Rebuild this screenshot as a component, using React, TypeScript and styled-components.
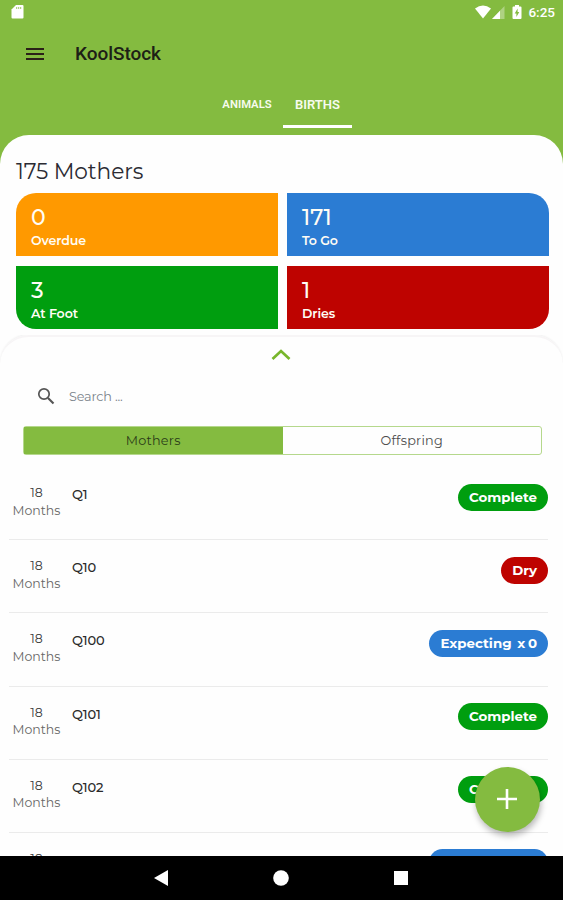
import React from "react";
import styled, { createGlobalStyle } from "styled-components";

const GREEN = "#84bb40";
const COMPLETE = "#009e0f";
const BLUE = "#2b7cd3";
const RED = "#be0300";

const GlobalStyle = createGlobalStyle`
  * { box-sizing: border-box; }
  body { margin: 0; background: #fff; font-family: Montserrat, Inter, sans-serif; }
  button, input { font: inherit; border: 0; padding: 0; background: none; }
`;

const Screen = styled.div`
  position: relative;
  display: flex;
  flex-direction: column;
  width: 563px;
  height: 900px;
  overflow: hidden;
  background: ${GREEN};
`;

const StatusBar = styled.div`
  display: flex;
  align-items: center;
  height: 24px;
  padding: 0 8px 0 11px;
  color: #fff;
`;

const StatusIcons = styled.div`
  display: flex;
  align-items: center;
  margin-left: auto;
`;

const BatteryIcon = styled.svg`
  margin-left: 7px;
`;

const Clock = styled.span`
  margin-left: 6px;
  font: 500 13.5px/24px Roboto, sans-serif;
`;

const AppBar = styled.header`
  display: flex;
  align-items: center;
  height: 59px;
  padding-left: 26px;
`;

const MenuButton = styled.button`
  display: flex;
  width: 18px;
  color: #2b2118;
`;

const AppTitle = styled.h1`
  margin: 0 0 0 31px;
  font: 500 19px/24px Roboto, sans-serif;
  letter-spacing: -0.05px;
  color: #1d2016;
`;

const Tabs = styled.nav`
  display: flex;
  height: 52px;
  padding-left: 211px;
`;

const Tab = styled.button<{ $active?: boolean }>`
  width: ${(p) => (p.$active ? 69 : 72)}px;
  height: 45px;
  padding-top: 2px;
  border-bottom: 3px solid ${(p) => (p.$active ? "#fff" : "transparent")};
  font: ${(p) => (p.$active ? "600 13px" : "600 11.3px")}/40px Roboto, sans-serif;
  color: #f7fbee;
`;

const Summary = styled.section`
  height: 200px;
  flex: none;
  padding: 22px 14px 0 16px;
  background: #fefefe;
  border-radius: 29px 29px 0 0;
`;

const SummaryTitle = styled.h2`
  margin: 0;
  height: 36px;
  font-size: 21.7px;
  font-weight: 400;
  line-height: 29px;
  letter-spacing: -0.1px;
  color: #2b2b33;
`;

const CardGrid = styled.div`
  display: grid;
  grid-template-columns: 1fr 1fr;
  grid-auto-rows: 63px;
  gap: 9.5px 9px;
`;

const Card = styled.div<{ $color: string; $radius: string }>`
  padding: 11px 15px 0;
  background: ${(p) => p.$color};
  border-radius: ${(p) => p.$radius};
  color: #fffdf5;
`;

const CardValue = styled.div`
  font-size: 22px;
  font-weight: 500;
  line-height: 27px;
`;

const CardLabel = styled.div`
  font-size: 12.6px;
  font-weight: 600;
  line-height: 20px;
  letter-spacing: -0.1px;
`;

const Sheet = styled.section`
  display: flex;
  flex-direction: column;
  flex: 1;
  min-height: 0;
  overflow: hidden;
  background: #fefefe;
`;

const SheetTop = styled.div`
  display: flex;
  justify-content: center;
  flex: none;
  height: 36px;
  padding: 12px 1px 0 0;
  border-top: 2px solid #f7f5f6;
  border-radius: 29px 29px 0 0;
  box-shadow: 0 -1px 2px rgba(0, 0, 0, 0.06);
`;

const SearchRow = styled.label`
  display: flex;
  align-items: center;
  flex: none;
  height: 50px;
  padding-left: 37px;
`;

const SearchInput = styled.input`
  width: 300px;
  margin-left: 14px;
  outline: 0;
  font-size: 12.8px;
  letter-spacing: -0.15px;
  &::placeholder { color: #7b838b; opacity: 1; }
`;

const Segments = styled.div`
  display: flex;
  flex: none;
  width: 519px;
  height: 29px;
  margin: 5px 0 12px 23px;
  border: 1px solid #b5d88c;
  border-radius: 3px;
`;

const Segment = styled.button<{ $active?: boolean }>`
  flex: 1;
  background: ${(p) => (p.$active ? GREEN : "transparent")};
  font-size: 12.8px;
  letter-spacing: 0.25px;
  color: ${(p) => (p.$active ? "#2b3b18" : "#4c4c4c")};
`;

const List = styled.ul`
  margin: 0;
  padding: 0 15px 0 9px;
  list-style: none;
`;

const Row = styled.li`
  display: flex;
  height: 73.2px;
  border-bottom: 1.5px solid #ebebeb;
`;

const Age = styled.div`
  width: 55px;
  padding-top: 17px;
  text-align: center;
  font-size: 12.5px;
  line-height: 17.5px;
  color: #666;
`;

const AgeNumber = styled.div`
  color: #383838;
`;

const Name = styled.div`
  flex: 1;
  padding: 17px 0 0 8px;
  font-size: 13px;
  font-weight: 500;
  letter-spacing: -0.1px;
  line-height: 20px;
  color: #2a2a2a;
`;

const Badge = styled.span<{ $color: string }>`
  height: 27px;
  margin-top: 16.5px;
  padding: 0 11px;
  border-radius: 14px;
  background: ${(p) => p.$color};
  font-size: 13.4px;
  font-weight: 700;
  line-height: 27px;
  word-spacing: -1px;
  white-space: pre;
  color: #fff;
`;

const Fab = styled.button`
  position: absolute;
  left: 474.5px;
  top: 766.5px;
  display: flex;
  align-items: center;
  justify-content: center;
  width: 65px;
  height: 65px;
  border-radius: 50%;
  background: ${GREEN};
  box-shadow: 1px 4px 6px rgba(0, 0, 0, 0.28);
`;

const NavBar = styled.footer`
  display: flex;
  align-items: center;
  justify-content: center;
  gap: 104px;
  flex: none;
  height: 44px;
  padding-right: 1px;
  background: #000;
`;

const cards = [
  { value: "0", label: "Overdue", color: "#ff9900", radius: "20px 0 0 0" },
  { value: "171", label: "To Go", color: BLUE, radius: "0 20px 0 0" },
  { value: "3", label: "At Foot", color: COMPLETE, radius: "0 0 0 20px" },
  { value: "1", label: "Dries", color: RED, radius: "0 0 20px 0" },
];

const animals = [
  { name: "Q1", status: "Complete", color: COMPLETE },
  { name: "Q10", status: "Dry", color: RED },
  { name: "Q100", status: "Expecting  x 0", color: BLUE },
  { name: "Q101", status: "Complete", color: COMPLETE },
  { name: "Q102", status: "Complete", color: COMPLETE },
  { name: "Q103", status: "Expecting  x 0", color: BLUE },
];

export default function App() {
  return (
    <Screen>
      <GlobalStyle />
      <StatusBar>
        <svg width="13" height="15" viewBox="0 0 13 15">
          <path d="M5 0h6.500q1 0 1 1v11.500q0 1-1 1h-10q-1 0-1-1V4.500z" fill="#fff" />
          <path d="M5.700 2v2M7.700 2v2M9.700 2v2" stroke={GREEN} strokeWidth="0.8" />
        </svg>
        <StatusIcons>
          <svg width="16" height="14" viewBox="0 0 16 14">
            <path d="M0 3.400Q8-2.400 16 3.400L8 13.500z" fill="#fff" />
          </svg>
          <svg width="14" height="13" viewBox="0 0 14 13">
            <path d="M13.500 0v13H1z" fill="#fff" opacity="0.35" />
            <path d="M9 4.700V13H1z" fill="#fff" />
          </svg>
          <BatteryIcon width="10" height="15" viewBox="0 0 10 15">
            <path d="M3 0h4v1.500h1.500q1 0 1 1V13q0 1-1 1h-7q-1 0-1-1V2.500q0-1 1-1H3z" fill="#fff" />
            <path d="M5.600 3.500 2.700 8.400h1.700V12l2.900-5H5.600z" fill={GREEN} />
          </BatteryIcon>
          <Clock>6:25</Clock>
        </StatusIcons>
      </StatusBar>
      <AppBar>
        <MenuButton aria-label="Menu">
          <svg width="18" height="12" viewBox="0 0 18 12">
            <path d="M0 1h18M0 6h18M0 11h18" stroke="currentColor" strokeWidth="1.8" />
          </svg>
        </MenuButton>
        <AppTitle>KoolStock</AppTitle>
      </AppBar>
      <Tabs>
        <Tab>ANIMALS</Tab>
        <Tab $active>BIRTHS</Tab>
      </Tabs>
      <Summary>
        <SummaryTitle>175 Mothers</SummaryTitle>
        <CardGrid>
          {cards.map((c) => (
            <Card key={c.label} $color={c.color} $radius={c.radius}>
              <CardValue>{c.value}</CardValue>
              <CardLabel>{c.label}</CardLabel>
            </Card>
          ))}
        </CardGrid>
      </Summary>
      <Sheet>
        <SheetTop>
          <svg width="20" height="12" viewBox="0 0 20 12">
            <path d="m1.500 10 8.500-8 8.500 8" fill="none" stroke="#78b62b" strokeWidth="2.700" />
          </svg>
        </SheetTop>
        <SearchRow>
          <svg width="18" height="18" viewBox="0 0 18 18" fill="none" stroke="#555">
            <circle cx="7" cy="7" r="5.200" strokeWidth="1.700" />
            <path d="m11 11 5.500 5.500" strokeWidth="2.100" />
          </svg>
          <SearchInput placeholder="Search ..." />
        </SearchRow>
        <Segments>
          <Segment $active>Mothers</Segment>
          <Segment>Offspring</Segment>
        </Segments>
        <List>
          {animals.map((a) => (
            <Row key={a.name}>
              <Age>
                <AgeNumber>18</AgeNumber>
                Months
              </Age>
              <Name>{a.name}</Name>
              <Badge $color={a.color}>{a.status}</Badge>
            </Row>
          ))}
        </List>
      </Sheet>
      <NavBar>
        <svg width="16" height="16" viewBox="0 0 16 16">
          <path d="M15 0v16L1 8z" fill="#fff" />
        </svg>
        <svg width="16" height="16" viewBox="0 0 16 16">
          <circle cx="8" cy="8" r="7.800" fill="#fff" />
        </svg>
        <svg width="16" height="16" viewBox="0 0 16 16">
          <path d="M1 1h14v14H1z" fill="#fff" />
        </svg>
      </NavBar>
      <Fab aria-label="Add">
        <svg width="20" height="20" viewBox="0 0 20 20">
          <path d="M10 0v20M0 10h20" stroke="#fff" strokeWidth="2.600" />
        </svg>
      </Fab>
    </Screen>
  );
}
